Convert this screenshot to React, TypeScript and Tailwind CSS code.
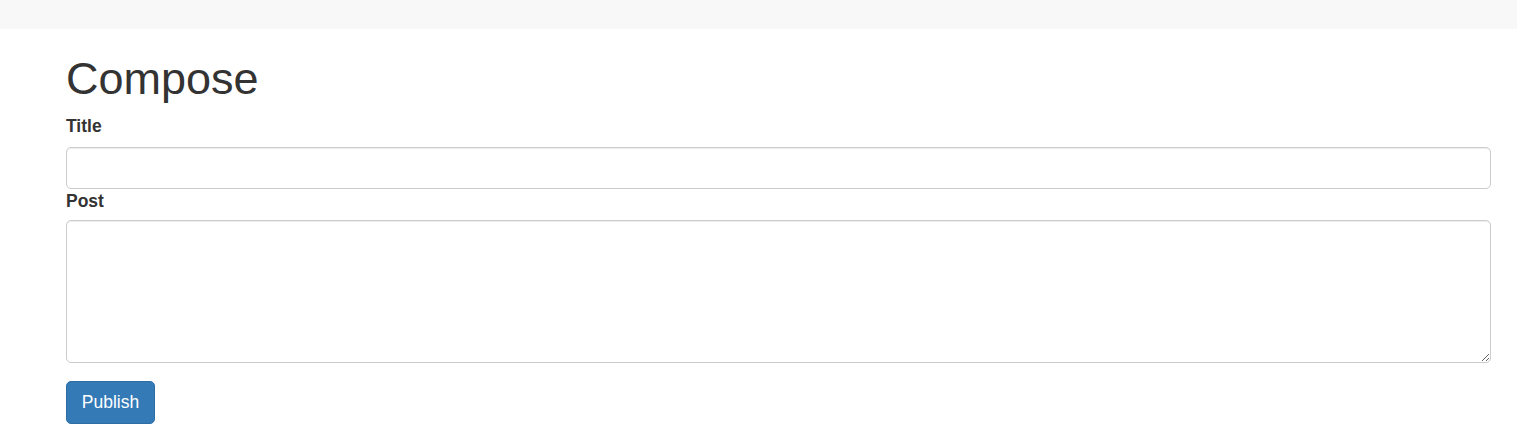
export default function App() {
  return (
    <div className="min-h-[437px] bg-white" style={{ fontFamily: '"Liberation Sans", Arial, sans-serif' }}>
      <div className="h-[29px] bg-[#f8f8f8]" />
      <div className="pl-[66px] pr-[26px] text-[#333]">
        <h1 className="mt-[25px] mb-[10px] text-[45px] leading-[50px] font-normal">Compose</h1>
        <form className="flex flex-col" onSubmit={(e) => e.preventDefault()}>
          <label className="text-[17.5px] leading-[25px] font-bold mb-[8px]">Title</label>
          <input
            type="text"
            className="h-[42px] w-full rounded-[5px] border border-[#ccc] px-[15px] text-[17.5px] outline-none shadow-[inset_0_1px_1px_rgba(0,0,0,0.075)]"
          />
          <label className="text-[17.5px] leading-[25px] font-bold mb-[6px]">Post</label>
          <textarea
            className="h-[143px] w-full rounded-[5px] border border-[#ccc] px-[15px] py-[7px] text-[17.5px] outline-none shadow-[inset_0_1px_1px_rgba(0,0,0,0.075)] block"
          />
          <div className="mt-[18px]">
            <button
              type="submit"
              className="h-[43px] w-[89px] rounded-[5px] border border-[#2e6da4] bg-[#337ab7] text-[17.5px] leading-[25px] text-white"
            >
              Publish
            </button>
          </div>
        </form>
      </div>
    </div>
  );
}
